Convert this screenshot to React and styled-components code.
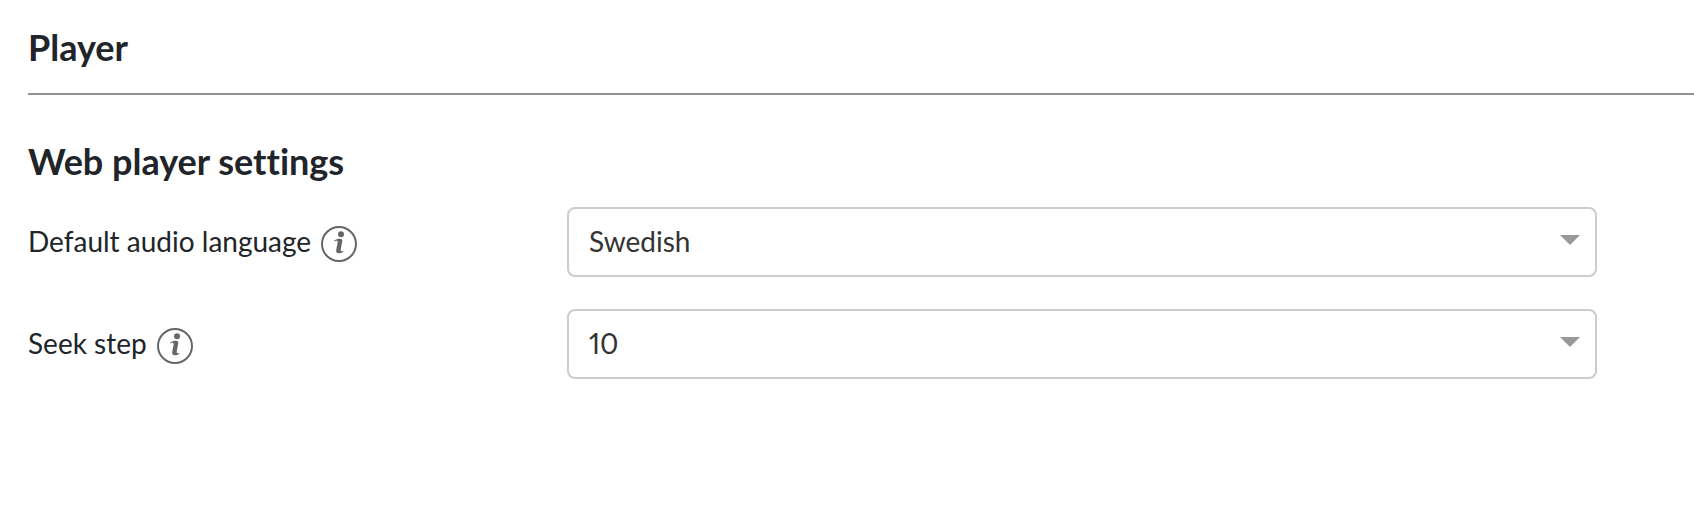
import React, { useState } from 'react';
import styled, { createGlobalStyle } from 'styled-components';

const GlobalStyle = createGlobalStyle`
  * {
    box-sizing: border-box;
  }

  body {
    margin: 0;
    background-color: #fff;
    color: #212529;
    font-family: Lato, 'Open Sans', sans-serif;
    font-size: 28px;
    font-variant-ligatures: none;
    font-variant-numeric: proportional-nums;
    line-height: 40px;
  }
`;

const Page = styled.main`
  padding: 25px 0 40px 28px;
`;

const PageTitle = styled.h1`
  margin: 0;
  padding-bottom: 24px;
  border-bottom: 2px solid #929292;
  font-size: 36px;
  font-weight: 700;
  line-height: 44px;
`;

const SectionTitle = styled.h2`
  margin: 44px 0 24px;
  font-size: 36px;
  font-weight: 700;
  line-height: 44px;
`;

const SettingsForm = styled.form`
  display: flex;
  flex-direction: column;
  gap: 32px;
  padding-right: 97px;
`;

const SettingRow = styled.div`
  display: grid;
  grid-template-columns: 539px 1fr;
  align-items: center;
`;

const LabelBlock = styled.div`
  display: flex;
  align-items: center;
  gap: 10px;
  padding-bottom: 2px;
`;

const InfoButton = styled.button`
  display: flex;
  margin-top: 6px;
  padding: 0;
  border: none;
  background: none;
  color: #666;
  cursor: pointer;
`;

const SelectBlock = styled.div`
  position: relative;

  &::after {
    content: '';
    position: absolute;
    top: 28px;
    right: 17px;
    border: 10px solid transparent;
    border-top-color: #999;
    border-bottom: none;
    pointer-events: none;
  }
`;

const Select = styled.select`
  display: block;
  width: 100%;
  height: 70px;
  padding: 0 48px 2px 20px;
  border: 2px solid #ccc;
  border-radius: 8px;
  background-color: #fff;
  color: #333;
  font: inherit;
  font-variant-numeric: proportional-nums;
  appearance: none;
`;

const InfoIcon = () => (
  <svg width="36" height="36" viewBox="0 0 36 36" fill="none" aria-hidden="true">
    <circle cx="18" cy="18" r="17" stroke="currentColor" strokeWidth="2" />
    <circle cx="20" cy="8.3" r="3" fill="currentColor" />
    <path
      d="M13.4 14.4C15 13.3 16.8 12.8 18.9 12.8C20.8 12.8 21.6 13.7 21.3 15.3L19.8 23C19.5 24.7 19.9 25.3 21 25.2C21.4 25.2 21.8 25.1 22.3 24.9L22.1 26.1C20.8 26.9 19.2 27.3 17.8 27.3C15.6 27.3 14.8 26.1 15.2 24.1L16.6 16.5C16.8 15.2 16.4 14.7 15.2 14.8C14.6 14.8 14 15 13.2 15.4Z"
      fill="currentColor"
    />
  </svg>
);

const settings = [
  {
    id: 'audio-language',
    label: 'Default audio language',
    options: ['Swedish', 'English', 'Finnish', 'Norwegian'],
  },
  {
    id: 'seek-step',
    label: 'Seek step',
    options: ['10', '15', '30', '60'],
  },
];

const Setting = ({ id, label, options }) => {
  const [value, setValue] = useState(options[0]);

  return (
    <SettingRow>
      <LabelBlock>
        <label htmlFor={id}>{label}</label>
        <InfoButton type="button" aria-label={`About ${label}`}>
          <InfoIcon />
        </InfoButton>
      </LabelBlock>
      <SelectBlock>
        <Select id={id} value={value} onChange={(e) => setValue(e.target.value)}>
          {options.map((option) => (
            <option key={option}>{option}</option>
          ))}
        </Select>
      </SelectBlock>
    </SettingRow>
  );
};

const App = () => (
  <>
    <GlobalStyle />
    <Page>
      <PageTitle>Player</PageTitle>
      <SectionTitle>Web player settings</SectionTitle>
      <SettingsForm>
        {settings.map((setting) => (
          <Setting key={setting.id} {...setting} />
        ))}
      </SettingsForm>
    </Page>
  </>
);

export default App;
